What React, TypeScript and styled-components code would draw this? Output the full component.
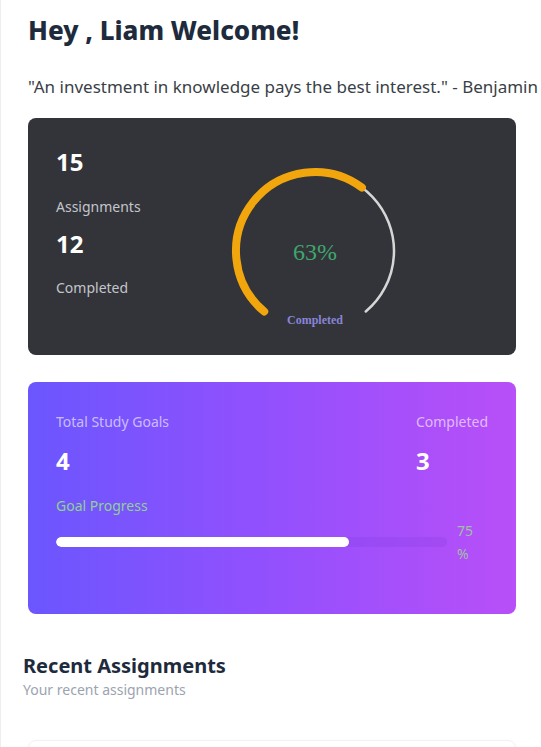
import React from "react";
import styled, { createGlobalStyle } from "styled-components";

const Global = createGlobalStyle`
  html, body { margin: 0; padding: 0; background: #ffffff; overflow-x: hidden; }
  body { font-family: "Noto Sans", "Open Sans", sans-serif; }
`;

const Page = styled.div`
  width: 541px;
  box-sizing: border-box;
  border-left: 1px solid #eeeeee;
  min-height: 747px;
  overflow: hidden;
`;

const Top = styled.div`
  padding: 12px 25px 0 27px;
`;

const Title = styled.h1`
  margin: 0;
  font-size: 26px;
  line-height: 36px;
  font-weight: 800;
  color: #1e2b3c;
`;

const Quote = styled.p`
  margin: 26px -25px 0 0;
  font-size: 17px;
  line-height: 26px;
  color: #3a3f47;
  white-space: nowrap;
`;

const DarkCard = styled.section`
  margin-top: 18px;
  background: #333439;
  border-radius: 8px;
  height: 237px;
  box-sizing: border-box;
  padding: 28px;
  display: flex;
  align-items: flex-start;
`;

const StatCol = styled.div`
  width: 160px;
  display: flex;
  flex-direction: column;
`;

const BigNum = styled.div<{ $gap?: number }>`
  margin-top: ${(p) => p.$gap ?? 0}px;
  font-size: 24px;
  line-height: 32px;
  font-weight: 700;
  color: #ffffff;
`;

const StatLabel = styled.div<{ $gap?: number }>`
  margin-top: ${(p) => p.$gap ?? 0}px;
  font-size: 14px;
  line-height: 20px;
  color: #c3c5cc;
`;

const Gauge = styled.svg`
  display: block;
  flex: none;
`;

const GoalCard = styled.section`
  margin-top: 27px;
  border-radius: 8px;
  background: linear-gradient(90deg, #6b56fe 0%, #9350fd 50%, #b84ff8 100%);
  padding: 28px 28px 49px;
`;

const GoalTop = styled.div`
  display: flex;
  justify-content: space-between;
`;

const GoalCol = styled.div`
  display: flex;
  flex-direction: column;
`;

const GoalLabel = styled.div`
  font-size: 14px;
  line-height: 24px;
  color: rgba(255, 255, 255, 0.62);
`;

const GoalNum = styled.div`
  margin-top: 11px;
  font-size: 24px;
  line-height: 32px;
  font-weight: 700;
  color: #ffffff;
`;

const ProgressLabel = styled.div`
  margin-top: 17px;
  font-size: 14px;
  line-height: 24px;
  color: #8fd28f;
`;

const ProgressRow = styled.div`
  margin-top: 1px;
  display: flex;
  align-items: center;
  gap: 10px;
`;

const Track = styled.div`
  flex: 1;
  height: 10px;
  border-radius: 5px;
  background: rgba(90, 40, 200, 0.12);
  overflow: hidden;
`;

const Fill = styled.div`
  height: 100%;
  border-radius: 5px;
  background: #ffffff;
`;

const Percent = styled.div`
  width: 31px;
  font-size: 14px;
  line-height: 23px;
  color: rgba(160, 205, 150, 0.9);
`;

const Recent = styled.div`
  padding: 38px 25px 0 22px;
`;

const RecentTitle = styled.h2`
  margin: 0;
  font-size: 20px;
  line-height: 28px;
  font-weight: 700;
  color: #1e2b3c;
`;

const RecentSub = styled.div`
  font-size: 14px;
  line-height: 20px;
  color: #9ca3af;
`;

const ListCard = styled.div`
  margin: 40px 0 0 5px;
  height: 60px;
  border: 1px solid #f2f2f2;
  border-radius: 8px;
  box-shadow: 0 1px 3px rgba(0, 0, 0, 0.05);
`;

const cx = 99;
const cy = 105;
const r = 79;
const pt = (deg: number) => {
  const a = (deg * Math.PI) / 180;
  return [cx + r * Math.sin(a), cy - r * Math.cos(a)];
};

export default function App() {
  const pct = 63;
  const start = 220;
  const span = 280;
  const [sx, sy] = pt(start);
  const [ex, ey] = pt(start + span);
  const [ox, oy] = pt(start + (span * pct) / 100);
  const goalPct = 75;
  return (
    <>
      <Global />
      <Page>
        <Top>
          <Title>Hey , Liam Welcome!</Title>
          <Quote>"An investment in knowledge pays the best interest." - Benjamin</Quote>
          <DarkCard>
            <StatCol>
              <BigNum>15</BigNum>
              <StatLabel $gap={19}>Assignments</StatLabel>
              <BigNum $gap={11}>12</BigNum>
              <StatLabel $gap={18}>Completed</StatLabel>
            </StatCol>
            <Gauge width="198" height="181" viewBox="0 0 198 181">
              <path
                d={`M ${sx} ${sy} A ${r} ${r} 0 1 1 ${ex} ${ey}`}
                fill="none"
                stroke="#d6d6d6"
                strokeWidth="2.5"
                strokeLinecap="round"
              />
              <path
                d={`M ${sx} ${sy} A ${r} ${r} 0 0 1 ${ox} ${oy}`}
                fill="none"
                stroke="#f2a60e"
                strokeWidth="8"
                strokeLinecap="round"
              />
              <text
                x={cx}
                y={cy + 9}
                textAnchor="middle"
                fontFamily="'Liberation Serif', serif"
                fontSize="24"
                fill="#3fa66c"
              >
                63%
              </text>
              <text
                x={cx}
                y={178}
                textAnchor="middle"
                fontFamily="'Liberation Serif', serif"
                fontWeight="700"
                fontSize="12"
                fill="#8884d8"
              >
                Completed
              </text>
            </Gauge>
          </DarkCard>
          <GoalCard>
            <GoalTop>
              <GoalCol>
                <GoalLabel>Total Study Goals</GoalLabel>
                <GoalNum>4</GoalNum>
              </GoalCol>
              <GoalCol>
                <GoalLabel>Completed</GoalLabel>
                <GoalNum>3</GoalNum>
              </GoalCol>
            </GoalTop>
            <ProgressLabel>Goal Progress</ProgressLabel>
            <ProgressRow>
              <Track>
                <Fill style={{ width: `${goalPct}%` }} />
              </Track>
              <Percent>{goalPct} %</Percent>
            </ProgressRow>
          </GoalCard>
        </Top>
        <Recent>
          <RecentTitle>Recent Assignments</RecentTitle>
          <RecentSub>Your recent assignments</RecentSub>
          <ListCard />
        </Recent>
      </Page>
    </>
  );
}
